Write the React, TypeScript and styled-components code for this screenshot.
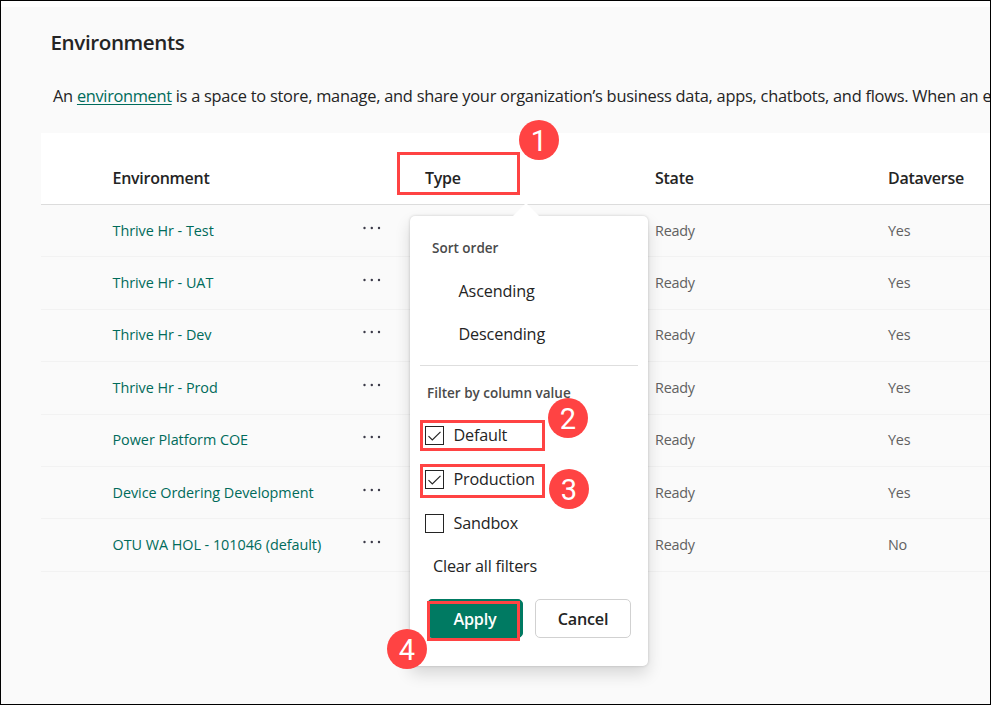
import React from "react";
import styled, { createGlobalStyle } from "styled-components";

const GlobalStyle = createGlobalStyle`
  *, *::before, *::after { box-sizing: border-box; }
  body { margin: 0; font-family: "Open Sans", "Noto Sans", sans-serif; color: #242424; }
`;

const RED = "#ff4343";
const GREEN = "#006b5b";

const Page = styled.main`
  position: relative;
  width: 991px;
  height: 705px;
  overflow: hidden;
  border: 1px solid #000;
  background: #fff;
  padding-top: 6px;
`;

const Content = styled.div`
  height: 100%;
  background: #fafafa;
  padding: 21px 0 0 40px;
`;

const Title = styled.h1`
  margin: 0 0 0 9.5px;
  font-size: 20.6px;
  line-height: 28px;
  font-weight: 600;
  letter-spacing: -0.4px;
`;

const Intro = styled.p`
  margin: 28px 0 0 12px;
  height: 49px;
  font-size: 16.4px;
  line-height: 24px;
  letter-spacing: -0.25px;
  white-space: nowrap;
`;

const IntroLink = styled.a`
  color: ${GREEN};
  letter-spacing: -0.34px;
  text-decoration: underline;
  text-decoration-thickness: 1px;
  text-underline-offset: 2px;
`;

const Grid = styled.div`
  display: grid;
  grid-template-columns: 248px 64.5px 230px 233px 1fr;
  padding-left: 71.5px;
`;

const HeaderRow = styled(Grid)`
  height: 72px;
  padding-top: 33px;
  background: #fff;
  border-bottom: 1px solid #dcdcdc;
  font-size: 16px;
  line-height: 24px;
  font-weight: 600;
  letter-spacing: -0.26px;
`;

const TypeHeader = styled.span`
  grid-column: 3;
`;

const Row = styled(Grid)`
  height: 52.4px;
  align-items: center;
  border-bottom: 1px solid #f2f2f2;
  font-size: 14.4px;
  line-height: 20px;
`;

const NameLink = styled.a`
  color: ${GREEN};
  letter-spacing: -0.04px;
  white-space: nowrap;
`;

const Cell = styled.span<{ $column: number }>`
  grid-column: ${(p) => p.$column};
  color: #616161;
  letter-spacing: -0.25px;
`;

const MoreIcon = styled.svg`
  display: block;
  margin: -6px 0 0 1px;
  fill: #3b3a48;
`;

const Popover = styled.section`
  position: absolute;
  left: 409px;
  top: 215px;
  width: 238px;
  height: 450px;
  padding: 21px 10px 0;
  border-radius: 5px;
  background: #fff;
  box-shadow: 0 8px 16px rgba(0, 0, 0, 0.14), 0 0 3px rgba(0, 0, 0, 0.18);
`;

const Beak = styled.svg`
  position: absolute;
  left: 102px;
  top: -13px;
  fill: #fff;
`;

const GroupLabel = styled.div<{ $indent: number }>`
  padding-left: ${(p) => p.$indent}px;
  font-size: 13.5px;
  line-height: 22px;
  font-weight: 600;
  color: #4a4a4a;
  white-space: nowrap;
`;

const SortList = styled.div`
  display: grid;
  gap: 19px;
  padding: 20px 0 0 38.5px;
`;

const SortItem = styled.div`
  font-size: 16.2px;
  line-height: 24px;
  letter-spacing: -0.15px;
`;

const Divider = styled.hr`
  height: 1px;
  margin: 19px 0 16px;
  border: 0;
  background: #dedede;
`;

const Options = styled.div`
  display: grid;
  grid-template-rows: 43px 44.5px 43px;
  margin-top: 10px;
  padding-left: 4.5px;
`;

const Option = styled.label`
  display: flex;
  align-items: center;
  gap: 10px;
  font-size: 16.2px;
  line-height: 23px;
  letter-spacing: -0.2px;
`;

const CheckGlyph = styled.svg`
  flex: none;
  fill: none;
  stroke: #242424;
`;

const ClearLink = styled.div`
  padding-left: 13px;
  margin-top: 9px;
  font-size: 16.2px;
  line-height: 24px;
  letter-spacing: -0.2px;
`;

const Actions = styled.div`
  display: flex;
  gap: 12px;
  margin: 21px 0 0 7px;
`;

const Button = styled.button<{ $primary?: boolean }>`
  width: 96px;
  height: 39px;
  padding: 2px 0 0;
  border: 1px solid ${(p) => (p.$primary ? "#007a62" : "#d1d1d1")};
  border-radius: 5px;
  background: ${(p) => (p.$primary ? "#007a62" : "#fff")};
  color: ${(p) => (p.$primary ? "#fff" : "#242424")};
  font: 600 16.2px "Open Sans", "Noto Sans", sans-serif;
  letter-spacing: -0.25px;
`;

const Highlight = styled.div<{ $x: number; $y: number; $w: number; $h: number }>`
  position: absolute;
  left: ${(p) => p.$x - 1}px;
  top: ${(p) => p.$y - 1}px;
  width: ${(p) => p.$w}px;
  height: ${(p) => p.$h}px;
  border: 3px solid ${RED};
`;

const Badge = styled.div<{ $x: number; $y: number }>`
  position: absolute;
  left: ${(p) => p.$x - 1}px;
  top: ${(p) => p.$y - 1}px;
  display: grid;
  place-items: center;
  width: 40px;
  height: 40px;
  border-radius: 50%;
  background: ${RED};
  color: #fff;
  font: 29px/42px Roboto, Arial, sans-serif;
`;

const rows = [
  ["Thrive Hr - Test", "Yes"],
  ["Thrive Hr - UAT", "Yes"],
  ["Thrive Hr - Dev", "Yes"],
  ["Thrive Hr - Prod", "Yes"],
  ["Power Platform COE", "Yes"],
  ["Device Ordering Development", "Yes"],
  ["OTU WA HOL - 101046 (default)", "No"],
];

const filters = [
  { label: "Default", checked: true },
  { label: "Production", checked: true },
  { label: "Sandbox", checked: false },
];

function Checkbox({ checked }: { checked: boolean }) {
  return (
    <CheckGlyph width="19" height="19" viewBox="0 0 19 19">
      <rect x="0.5" y="0.5" width="18" height="18" />
      {checked && <path d="M3.5 10.2 7.3 14 15.5 5.8" strokeWidth="1.2" />}
    </CheckGlyph>
  );
}

export default function App() {
  return (
    <>
      <GlobalStyle />
      <Page>
        <Content>
          <Title>Environments</Title>
          <Intro>
            An <IntroLink>environment</IntroLink> is a space to store, manage, and share your
            organization’s business data, apps, chatbots, and flows. When an e
          </Intro>
          <HeaderRow>
            <span>Environment</span>
            <TypeHeader>Type</TypeHeader>
            <span>State</span>
            <span>Dataverse</span>
          </HeaderRow>
          {rows.map(([name, dataverse]) => (
            <Row key={name}>
              <NameLink>{name}</NameLink>
              <MoreIcon width="20" height="4" viewBox="0 0 20 4">
                <circle cx="2.5" cy="2" r="1.2" />
                <circle cx="9.8" cy="2" r="1.2" />
                <circle cx="17" cy="2" r="1.2" />
              </MoreIcon>
              <Cell $column={4}>Ready</Cell>
              <Cell $column={5}>{dataverse}</Cell>
            </Row>
          ))}
        </Content>

        <Popover>
          <Beak width="28" height="14" viewBox="0 0 28 14">
            <path d="M0.5 13.5 14 0 27.5 13.5V14H0.5Z" />
          </Beak>
          <GroupLabel $indent={12}>Sort order</GroupLabel>
          <SortList>
            <SortItem>Ascending</SortItem>
            <SortItem>Descending</SortItem>
          </SortList>
          <Divider />
          <GroupLabel $indent={7}>Filter by column value</GroupLabel>
          <Options>
            {filters.map((f) => (
              <Option key={f.label}>
                <Checkbox checked={f.checked} />
                {f.label}
              </Option>
            ))}
          </Options>
          <ClearLink>Clear all filters</ClearLink>
          <Actions>
            <Button $primary>Apply</Button>
            <Button>Cancel</Button>
          </Actions>
        </Popover>

        <Highlight $x={397} $y={152} $w={123} $h={43} />
        <Highlight $x={420} $y={420} $w={125} $h={31} />
        <Highlight $x={420} $y={464} $w={125} $h={34} />
        <Highlight $x={427} $y={601} $w={93} $h={40} />
        <Badge $x={519} $y={120}>1</Badge>
        <Badge $x={548} $y={398}>2</Badge>
        <Badge $x={549} $y={469}>3</Badge>
        <Badge $x={387} $y={629}>4</Badge>
      </Page>
    </>
  );
}
